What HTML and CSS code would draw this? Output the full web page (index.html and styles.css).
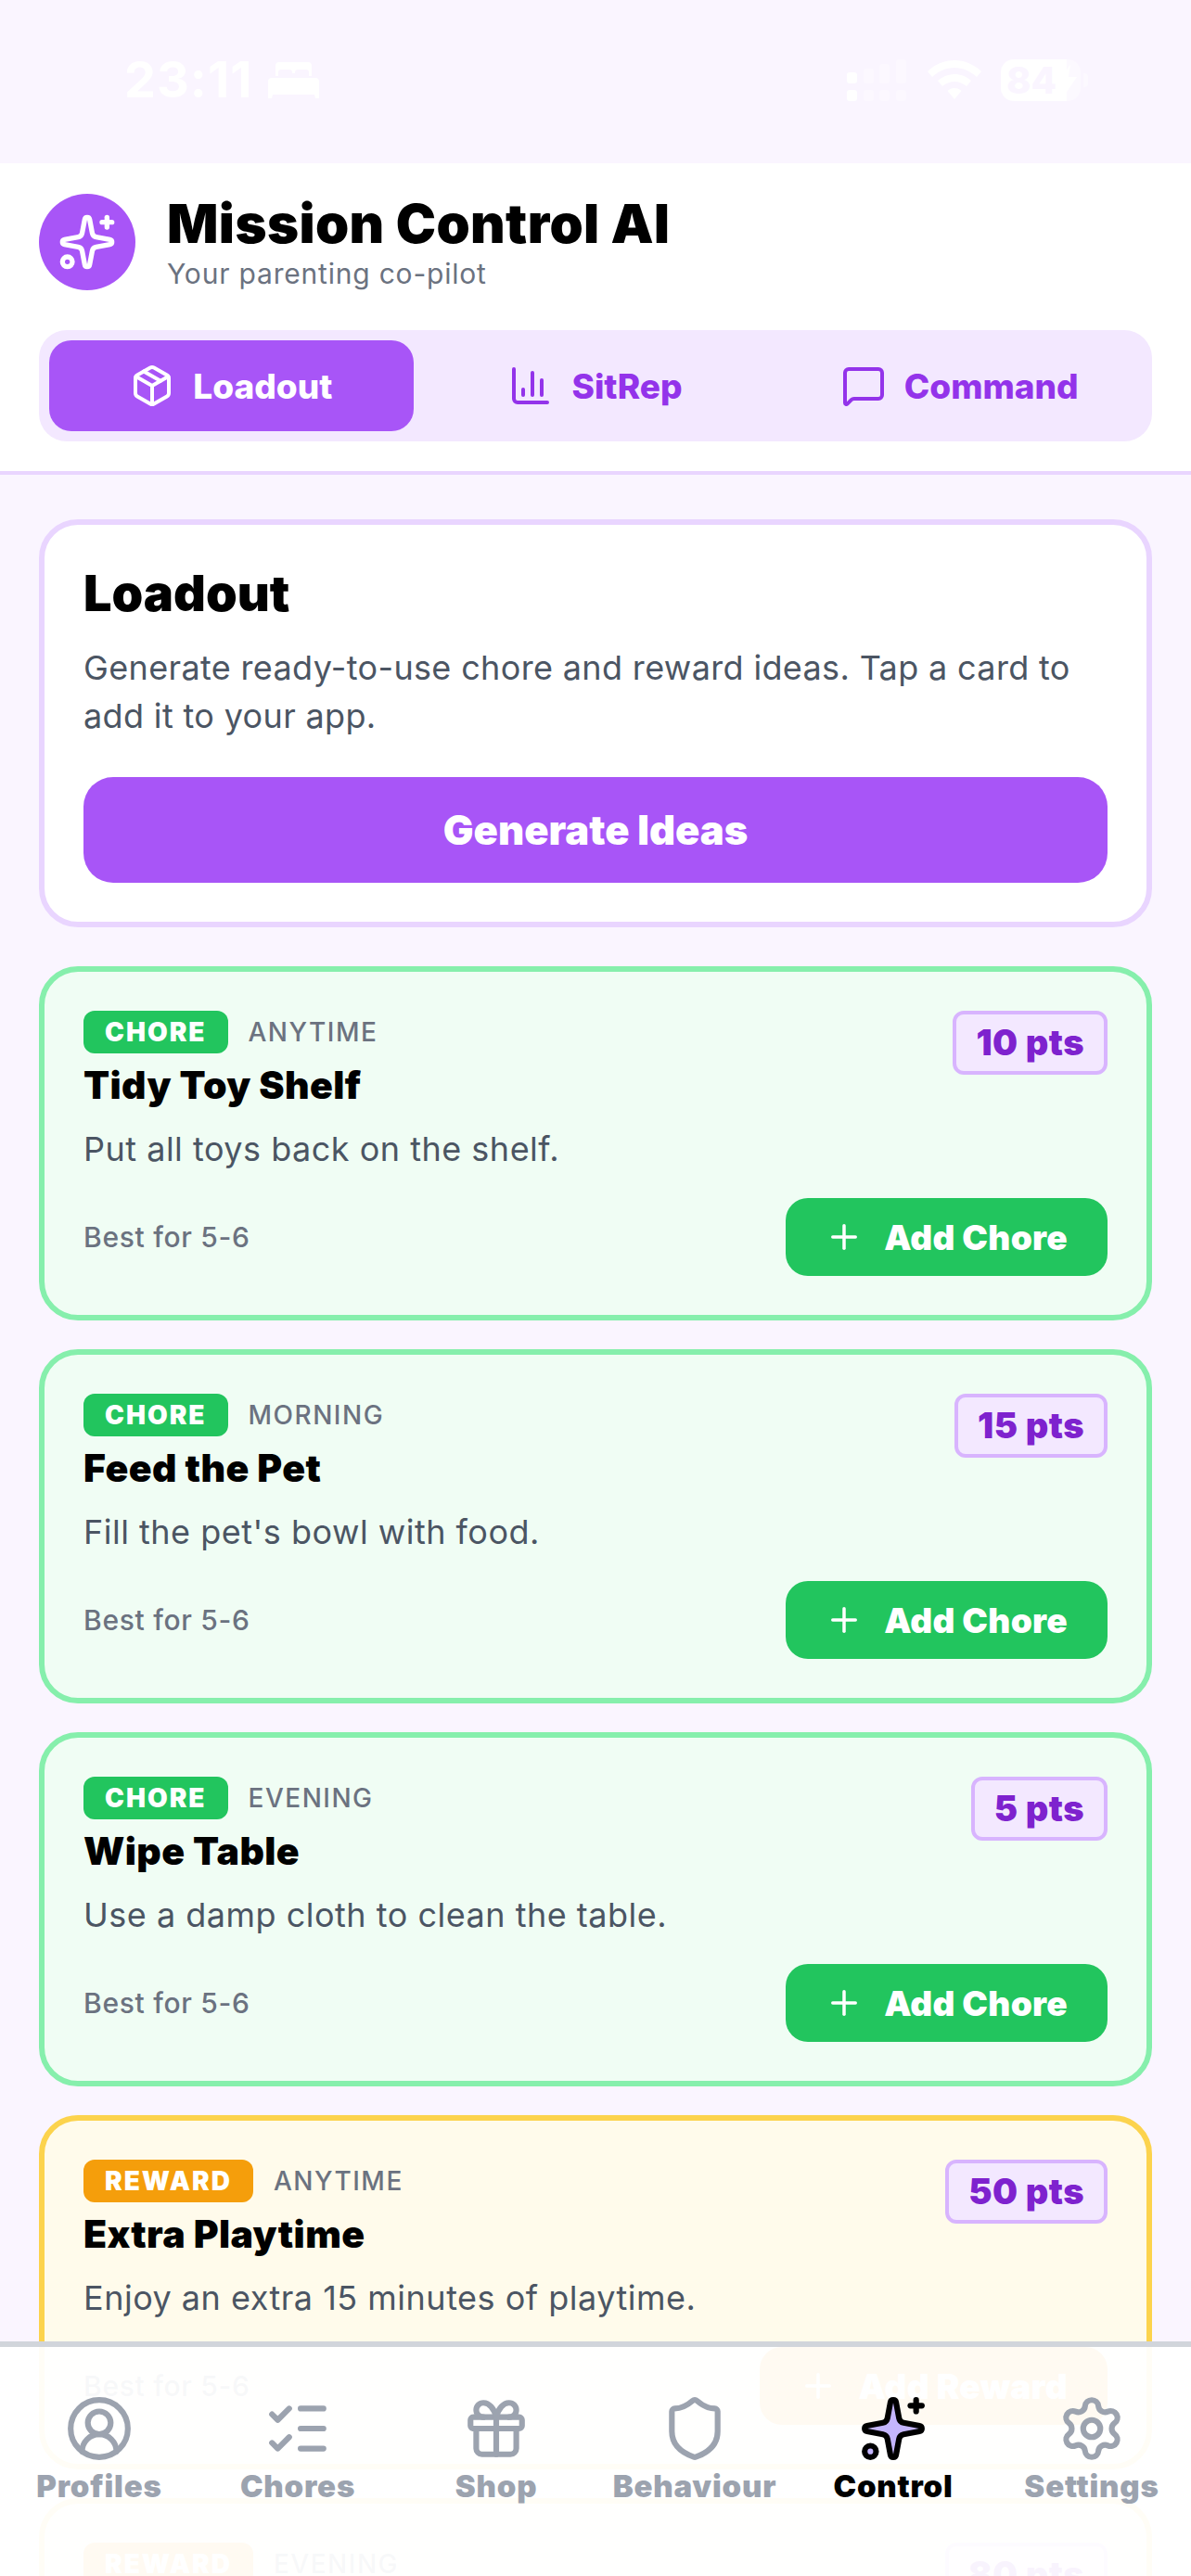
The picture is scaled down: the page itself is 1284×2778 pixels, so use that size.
FILE: index.html
```html
<!DOCTYPE html>
<html lang="en">
<head>
  <meta charset="UTF-8">
  <meta name="viewport" content="width=device-width, initial-scale=1.0">
  <title>Mission Control AI</title>
  <link rel="stylesheet" href="styles.css">
</head>
<body>

<svg class="sprites" width="0" height="0">
  <symbol id="i-sparkles" viewBox="0 0 24 24">
    <path d="M11.017 2.814a1 1 0 0 1 1.966 0l1.051 5.558a2 2 0 0 0 1.594 1.594l5.558 1.051a1 1 0 0 1 0 1.966l-5.558 1.051a2 2 0 0 0-1.594 1.594l-1.051 5.558a1 1 0 0 1-1.966 0l-1.051-5.558a2 2 0 0 0-1.594-1.594l-5.558-1.051a1 1 0 0 1 0-1.966l5.558-1.051a2 2 0 0 0 1.594-1.594z"/>
    <path d="M20 2v4"/><path d="M22 4h-4"/><circle cx="4" cy="20" r="2"/>
  </symbol>
  <symbol id="i-plus" viewBox="0 0 24 24"><path d="M5 12h14"/><path d="M12 5v14"/></symbol>
</svg>

<div class="app">
  <!-- status bar -->
  <div class="status-bar">
    <span class="status-time">23:11</span>
    <svg class="status-bed" viewBox="0 0 55 39"><path fill-rule="evenodd" d="M8 4a4 4 0 0 1 4-4h31a4 4 0 0 1 4 4v11h-3v-4a3 3 0 0 0-3-3h-9a3 3 0 0 0-3 3v1h-3v-1a3 3 0 0 0-3-3h-9a3 3 0 0 0-3 3v4H8z"/><path d="M0 21a4 4 0 0 1 4-4h47a4 4 0 0 1 4 4v18h-4l-1-4H5l-1 4H0z"/></svg>
    <span class="status-spacer"></span>
    <svg class="status-signal" viewBox="0 0 64 45">
      <rect x="0" y="14" width="11" height="12" rx="3"/>
      <rect class="faint" x="18" y="10" width="11" height="16" rx="3"/>
      <rect class="faint" x="35" y="5" width="11" height="21" rx="3"/>
      <rect class="faint" x="53" y="0" width="11" height="26" rx="3"/>
      <rect x="0" y="33" width="11" height="12" rx="3"/>
      <rect class="faint" x="18" y="33" width="11" height="12" rx="3"/>
      <rect class="faint" x="35" y="33" width="11" height="12" rx="3"/>
      <rect class="faint" x="53" y="33" width="11" height="12" rx="3"/>
    </svg>
    <svg class="status-wifi" viewBox="0 0 58 42"><path d="M29 0c11 0 21 4.500 29 12l-5 6C46.500 12 38 8 29 8S11.500 12 5 18l-5-6C8 4.500 18 0 29 0z"/><path d="M29 15c6.500 0 13 2.500 18 7l-5 6c-3.500-3-8-5-13-5s-9.500 2-13 5l-5-6c5-4.500 11.500-7 18-7z"/><path d="M29 30c3 0 5.500 1 7.500 3L29 42l-7.500-9c2-2 4.500-3 7.500-3z"/></svg>
    <div class="status-battery">
      84
      <svg class="battery-bolt" viewBox="0 0 20 36"><path d="M13 0 0 21h8l-3 15 15-22h-9z"/></svg>
    </div>
  </div>

  <!-- header -->
  <header class="header">
    <div class="brand">
      <div class="brand-logo"><svg class="icon"><use href="#i-sparkles"/></svg></div>
      <div>
        <h1 class="brand-title">Mission Control AI</h1>
        <p class="brand-sub">Your parenting co-pilot</p>
      </div>
    </div>
    <div class="tabs">
      <button class="tab active">
        <svg class="icon" viewBox="0 0 24 24"><path d="M11 21.730a2 2 0 0 0 2 0l7-4A2 2 0 0 0 21 16V8a2 2 0 0 0-1-1.730l-7-4a2 2 0 0 0-2 0l-7 4A2 2 0 0 0 3 8v8a2 2 0 0 0 1 1.730z"/><path d="M12 22V12"/><polyline points="3.290 7 12 12 20.710 7"/><path d="m7.500 4.270 9 5.150"/></svg>
        Loadout
      </button>
      <button class="tab">
        <svg class="icon" viewBox="0 0 24 24"><path d="M3 3v16a2 2 0 0 0 2 2h16"/><path d="M18 17V9"/><path d="M13 17V5"/><path d="M8 17v-3"/></svg>
        SitRep
      </button>
      <button class="tab">
        <svg class="icon" viewBox="0 0 24 24"><path d="M22 17a2 2 0 0 1-2 2H6.828a2 2 0 0 0-1.414.586l-2.202 2.202A.71.71 0 0 1 2 21.286V5a2 2 0 0 1 2-2h16a2 2 0 0 1 2 2z"/></svg>
        Command
      </button>
    </div>
  </header>

  <!-- scrolling content, runs on under the nav -->
  <main class="content">
    <section class="hero">
      <h2 class="hero-title">Loadout</h2>
      <p class="hero-text">Generate ready-to-use chore and reward ideas. Tap a card to add it to your app.</p>
      <button class="hero-btn">Generate Ideas</button>
    </section>

    <div class="cards">
      <article class="card chore">
        <div class="card-top">
          <div>
            <div class="card-tags"><span class="badge">CHORE</span><span class="when">ANYTIME</span></div>
            <h3 class="card-title">Tidy Toy Shelf</h3>
          </div>
          <span class="pts">10 pts</span>
        </div>
        <p class="card-text">Put all toys back on the shelf.</p>
        <div class="card-foot">
          <span class="best">Best for 5-6</span>
          <button class="add-btn"><svg class="icon"><use href="#i-plus"/></svg>Add Chore</button>
        </div>
      </article>

      <article class="card chore">
        <div class="card-top">
          <div>
            <div class="card-tags"><span class="badge">CHORE</span><span class="when">MORNING</span></div>
            <h3 class="card-title">Feed the Pet</h3>
          </div>
          <span class="pts">15 pts</span>
        </div>
        <p class="card-text">Fill the pet's bowl with food.</p>
        <div class="card-foot">
          <span class="best">Best for 5-6</span>
          <button class="add-btn"><svg class="icon"><use href="#i-plus"/></svg>Add Chore</button>
        </div>
      </article>

      <article class="card chore">
        <div class="card-top">
          <div>
            <div class="card-tags"><span class="badge">CHORE</span><span class="when">EVENING</span></div>
            <h3 class="card-title">Wipe Table</h3>
          </div>
          <span class="pts">5 pts</span>
        </div>
        <p class="card-text">Use a damp cloth to clean the table.</p>
        <div class="card-foot">
          <span class="best">Best for 5-6</span>
          <button class="add-btn"><svg class="icon"><use href="#i-plus"/></svg>Add Chore</button>
        </div>
      </article>

      <article class="card reward">
        <div class="card-top">
          <div>
            <div class="card-tags"><span class="badge">REWARD</span><span class="when">ANYTIME</span></div>
            <h3 class="card-title">Extra Playtime</h3>
          </div>
          <span class="pts">50 pts</span>
        </div>
        <p class="card-text">Enjoy an extra 15 minutes of playtime.</p>
        <div class="card-foot">
          <span class="best">Best for 5-6</span>
          <button class="add-btn"><svg class="icon"><use href="#i-plus"/></svg>Add Reward</button>
        </div>
      </article>

      <article class="card reward">
        <div class="card-top">
          <div class="card-tags"><span class="badge">REWARD</span><span class="when">EVENING</span></div>
          <span class="pts">80 pts</span>
        </div>
      </article>
    </div>
  </main>

  <!-- bottom nav -->
  <nav class="nav">
    <div class="nav-item">
      <svg class="icon" viewBox="0 0 24 24"><path d="M18 20a6 6 0 0 0-12 0"/><circle cx="12" cy="10" r="4"/><circle cx="12" cy="12" r="10"/></svg>
      <span>Profiles</span>
    </div>
    <div class="nav-item">
      <svg class="icon" viewBox="0 0 24 24"><path d="M13 5h8"/><path d="M13 12h8"/><path d="M13 19h8"/><path d="m3 17 2 2 4-4"/><path d="m3 7 2 2 4-4"/></svg>
      <span>Chores</span>
    </div>
    <div class="nav-item">
      <svg class="icon" viewBox="0 0 24 24"><rect x="3" y="8" width="18" height="4" rx="1"/><path d="M12 8v13"/><path d="M19 12v7a2 2 0 0 1-2 2H7a2 2 0 0 1-2-2v-7"/><path d="M7.500 8a2.500 2.500 0 0 1 0-5A4.800 8 0 0 1 12 8a4.800 8 0 0 1 4.500-5 2.500 2.500 0 0 1 0 5"/></svg>
      <span>Shop</span>
    </div>
    <div class="nav-item">
      <svg class="icon" viewBox="0 0 24 24"><path d="M20 13c0 5-3.500 7.500-7.660 8.950a1 1 0 0 1-.67-.01C7.500 20.500 4 18 4 13V6a1 1 0 0 1 1-1c2 0 4.500-1.200 6.240-2.720a1.170 1.170 0 0 1 1.520 0C14.510 3.810 17 5 19 5a1 1 0 0 1 1 1z"/></svg>
      <span>Behaviour</span>
    </div>
    <div class="nav-item active">
      <svg class="icon"><use href="#i-sparkles"/></svg>
      <span>Control</span>
    </div>
    <div class="nav-item">
      <svg class="icon" viewBox="0 0 24 24"><path d="M9.671 4.136a2.340 2.340 0 0 1 4.659 0 2.340 2.340 0 0 0 3.319 1.915 2.340 2.340 0 0 1 2.330 4.033 2.340 2.340 0 0 0 0 3.831 2.340 2.340 0 0 1-2.330 4.033 2.340 2.340 0 0 0-3.319 1.915 2.340 2.340 0 0 1-4.659 0 2.340 2.340 0 0 0-3.320-1.915 2.340 2.340 0 0 1-2.330-4.033 2.340 2.340 0 0 0 0-3.831A2.340 2.340 0 0 1 6.350 6.051a2.340 2.340 0 0 0 3.319-1.915"/><circle cx="12" cy="12" r="3"/></svg>
      <span>Settings</span>
    </div>
  </nav>
</div>

</body>
</html>
```
FILE: styles.css
```css
* {
  box-sizing: border-box;
}

body, html {
  margin: 0;
  padding: 0;
  height: 100%;
  overflow: hidden;
  font-family: Inter, "Noto Sans", sans-serif;
  background-color: #faf5ff;
}

h1, h2, h3, p {
  margin: 0;
}

button {
  border: none;
  font-family: inherit;
  cursor: pointer;
}

.sprites {
  position: absolute;
}

.icon {
  fill: none;
  stroke: currentColor;
  stroke-width: 2;
  stroke-linecap: round;
  stroke-linejoin: round;
  flex-shrink: 0;
}

.app {
  position: relative;
  display: flex;
  flex-direction: column;
  height: 100%;
  overflow: hidden;
}

/* status bar */
.status-bar {
  display: flex;
  align-items: center;
  height: 176px;
  padding: 0 119px 4px 134px;
  color: #fff;
  flex-shrink: 0;
}

.status-time {
  font-size: 54px;
  font-weight: 700;
  letter-spacing: 1px;
  line-height: 1;
  margin-right: 17px;
}

.status-bed {
  width: 55px;
  height: 39px;
  fill: #fff;
}

.status-spacer {
  flex: 1;
}

.status-signal {
  width: 64px;
  height: 45px;
  fill: #fff;
  margin-right: 23px;
}

.status-signal .faint {
  opacity: 0.35;
}

.status-wifi {
  width: 58px;
  height: 42px;
  fill: #fff;
  margin-right: 21px;
}

.status-battery {
  position: relative;
  width: 86px;
  height: 45px;
  padding-left: 6px;
  border-radius: 14px;
  background: linear-gradient(90deg, #fff 83%, rgba(255, 255, 255, 0.4) 83%);
  color: #faf5ff;
  font-size: 40px;
  font-weight: 800;
  line-height: 45px;
}

.status-battery::after {
  content: "";
  position: absolute;
  left: 89px;
  top: 15px;
  width: 5px;
  height: 15px;
  border-radius: 0 4px 4px 0;
  background-color: rgba(255, 255, 255, 0.4);
}

.battery-bolt {
  position: absolute;
  left: 62px;
  top: 5px;
  width: 20px;
  height: 36px;
  fill: #fff;
}

/* header */
.header {
  background-color: #fff;
  border-bottom: 4px solid #e9d5ff;
  padding: 33px 42px 32px;
  flex-shrink: 0;
}

.brand {
  display: flex;
  align-items: center;
  gap: 34px;
  margin-bottom: 43px;
}

.brand-logo {
  display: flex;
  align-items: center;
  justify-content: center;
  width: 104px;
  height: 104px;
  border-radius: 50%;
  background-color: #a855f7;
  color: #fff;
}

.brand-logo .icon {
  width: 64px;
  height: 64px;
}

.brand-title {
  font-size: 58px;
  font-weight: 900;
  letter-spacing: 0.400px;
  line-height: 64px;
  color: #000;
}

.brand-sub {
  margin-top: 4px;
  font-size: 30px;
  font-weight: 400;
  letter-spacing: 0.800px;
  line-height: 36px;
  color: #6b7280;
}

.tabs {
  display: flex;
  height: 120px;
  padding: 11px;
  border-radius: 30px;
  background-color: #f3e8ff;
}

.tab {
  flex: 1;
  display: flex;
  align-items: center;
  justify-content: center;
  gap: 20px;
  border-radius: 24px;
  background: none;
  color: #9333ea;
  font-size: 37px;
  font-weight: 800;
}

.tab .icon {
  width: 48px;
  height: 48px;
}

.tab.active {
  background-color: #a855f7;
  color: #fff;
}

/* content */
.content {
  padding: 48px 42px 0;
}

.hero {
  background-color: #fff;
  border: 6px solid #e9d5ff;
  border-radius: 42px;
  padding: 44px 42px 42px;
  margin-bottom: 42px;
}

.hero-title {
  font-size: 54px;
  font-weight: 900;
  line-height: 60px;
  color: #000;
  margin-bottom: 24px;
}

.hero-text {
  font-size: 36px;
  letter-spacing: 0.350px;
  line-height: 52px;
  color: #4b5563;
  margin-bottom: 40px;
}

.hero-btn {
  display: block;
  width: 100%;
  height: 114px;
  border-radius: 32px;
  background-color: #a855f7;
  color: #fff;
  font-size: 43.500px;
  font-weight: 900;
}

.cards {
  display: flex;
  flex-direction: column;
  gap: 31px;
}

.card {
  height: 382px;
  padding: 42px;
  border: 6px solid;
  border-radius: 42px;
  flex-shrink: 0;
}

.card.chore {
  border-color: #86efac;
  background-color: #f0fdf4;
}

.card.reward {
  border-color: #fcd34d;
  background-color: #fffbeb;
}

.card-top {
  display: flex;
  justify-content: space-between;
  align-items: flex-start;
}

.card-tags {
  display: flex;
  align-items: center;
  gap: 22px;
}

.badge {
  height: 46px;
  padding: 0 23px;
  border-radius: 12px;
  color: #fff;
  font-size: 28px;
  font-weight: 900;
  letter-spacing: 2px;
  line-height: 46px;
}

.chore .badge,
.chore .add-btn {
  background-color: #22c55e;
}

.reward .badge,
.reward .add-btn {
  background-color: #f59e0b;
}

.when {
  font-size: 28px;
  font-weight: 500;
  letter-spacing: 1.500px;
  color: #6b7280;
}

.card-title {
  margin-top: 8px;
  font-size: 41px;
  font-weight: 900;
  letter-spacing: 0.400px;
  line-height: 52px;
  color: #000;
}

.pts {
  height: 69px;
  padding: 0 21px;
  border: 4px solid #d8b4fe;
  border-radius: 12px;
  background-color: #f3e8ff;
  color: #7e22ce;
  font-size: 38px;
  font-weight: 900;
  letter-spacing: 0.500px;
  line-height: 61px;
}

.card-text {
  margin-top: 18px;
  font-size: 36px;
  letter-spacing: 0.500px;
  line-height: 50px;
  color: #4b5563;
}

.card-foot {
  display: flex;
  align-items: center;
  justify-content: space-between;
  margin-top: 28px;
}

.best {
  font-size: 30px;
  font-weight: 500;
  letter-spacing: 0.700px;
  color: #6b7280;
}

.add-btn {
  display: flex;
  align-items: center;
  gap: 22px;
  height: 84px;
  padding: 0 43px 0 42px;
  border-radius: 24px;
  color: #fff;
  font-size: 37px;
  font-weight: 900;
  letter-spacing: 0.300px;
}

.add-btn .icon {
  width: 42px;
  height: 42px;
}

/* bottom nav */
.nav {
  position: absolute;
  left: 0;
  right: 0;
  bottom: 0;
  height: 253px;
  display: grid;
  grid-template-columns: repeat(6, 1fr);
  align-items: start;
  padding-top: 51px;
  border-top: 6px solid #d1d5db;
  background-color: rgba(255, 255, 255, 0.95);
}

.nav-item {
  display: flex;
  flex-direction: column;
  align-items: center;
  gap: 5px;
  color: #9ca3af;
  font-size: 33px;
  font-weight: 900;
  letter-spacing: 0.800px;
  line-height: 40px;
}

.nav-item .icon {
  width: 74px;
  height: 74px;
}

.nav-item.active {
  color: #000;
}

.nav-item.active .icon {
  fill: #c4b5fd;
}
```
